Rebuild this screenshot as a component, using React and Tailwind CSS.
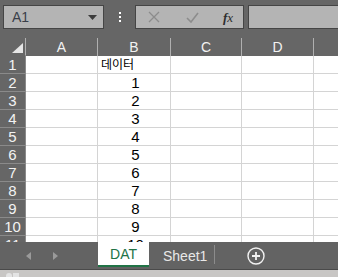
import React from "react";

const cols = [
  { name: "A", w: "w-[72px]" },
  { name: "B", w: "w-[73px]" },
  { name: "C", w: "w-[71px]" },
  { name: "D", w: "w-[72px]" },
];

const rows = [
  { n: 1, b: "데이터" },
  { n: 2, b: "1" },
  { n: 3, b: "2" },
  { n: 4, b: "3" },
  { n: 5, b: "4" },
  { n: 6, b: "5" },
  { n: 7, b: "6" },
  { n: 8, b: "7" },
  { n: 9, b: "8" },
  { n: 10, b: "9" },
  { n: 11, b: "10" },
];

function Row({ r }) {
  return (
    <div className="flex h-[18px] shrink-0">
      <div className="w-[26px] shrink-0 bg-[#666666] border-r border-b border-[#8a8a8a] flex items-center justify-center text-[15px] text-[#f2f2f2] leading-none">
        {r.n}
      </div>
      {cols.map((c) => (
        <div
          key={c.name}
          className={`${c.w} shrink-0 bg-white border-r border-b border-[#d4d4d4] flex items-center text-[15px] leading-none text-black ${
            c.name === "B" && r.n === 1 ? "justify-start pl-[3px]" : "justify-center"
          }`}
        >
          {c.name === "B" ? (
            r.n === 1 ? (
              <span className="text-[12px]">{r.b}</span>
            ) : (
              <span className="pl-[3px]">{r.b}</span>
            )
          ) : null}
        </div>
      ))}
      <div className="flex-1 bg-white border-b border-[#d4d4d4]" />
    </div>
  );
}

export default function App() {
  return (
    <div
      className="w-[338px] h-[277px] overflow-hidden flex flex-col bg-[#666666]"
      style={{ fontFamily: '"Liberation Sans", "Noto Sans CJK KR", sans-serif' }}
    >
      {/* formula bar */}
      <div className="h-[38px] shrink-0 flex items-start pt-[5px]">
        <div className="ml-[3px] w-[101px] h-[24px] bg-[#b4b4b4] border border-[#454545] flex items-center justify-between pl-[8px] pr-[6px]">
          <span className="text-[14px] text-[#3a3f4a] leading-none">A1</span>
          <svg width="9" height="5" viewBox="0 0 9 5">
            <path d="M0 0h9L4.5 5z" fill="#3c3c3c" />
          </svg>
        </div>
        <div className="w-[31px] h-[24px] flex flex-col items-center justify-center gap-[2px]">
          <div className="w-[2px] h-[2px] bg-white" />
          <div className="w-[2px] h-[2px] bg-white" />
          <div className="w-[2px] h-[2px] bg-white" />
        </div>
        <div className="w-[109px] h-[24px] bg-[#b4b4b4] border border-[#454545] flex items-center">
          <svg className="ml-[12px]" width="12" height="12" viewBox="0 0 12 12">
            <path d="M1 1l10 10M11 1L1 11" stroke="#8c8c8c" strokeWidth="1.3" />
          </svg>
          <svg className="ml-[26px]" width="13" height="11" viewBox="0 0 13 11">
            <path d="M1 6l4 4 7-9" stroke="#8c8c8c" strokeWidth="1.6" fill="none" />
          </svg>
          <span
            className="ml-[24px] text-[13px] italic text-[#2d2d2d] leading-none"
            style={{ fontFamily: '"Liberation Serif", serif' }}
          >
            <b>f</b>x
          </span>
        </div>
        <div className="ml-[4px] flex-1 h-[24px] bg-[#b4b4b4] border border-[#454545] border-r-0" />
      </div>

      {/* grid */}
      <div className="h-[204px] shrink-0 overflow-hidden flex flex-col">
        <div className="flex h-[18px] shrink-0 bg-[#666666]">
          <div className="w-[26px] shrink-0 border-r border-[#b0b0b0] border-b border-b-[#666666] flex items-end justify-end pr-[2px] pb-[2px]">
            <svg width="11" height="10" viewBox="0 0 11 10">
              <path d="M11 0v10H0z" fill="#e6e6e6" />
            </svg>
          </div>
          {cols.map((c) => (
            <div
              key={c.name}
              className={`${c.w} shrink-0 border-r border-[#b0b0b0] flex items-center justify-center text-[14px] text-[#f2f2f2] leading-none`}
            >
              {c.name}
            </div>
          ))}
          <div className="flex-1" />
        </div>
        {rows.map((r) => (
          <Row key={r.n} r={r} />
        ))}
      </div>

      {/* sheet tabs */}
      <div className="h-[28px] shrink-0 bg-[#636363] flex items-start border-b border-[#4a4a4a]">
        <div className="w-[98px] h-full flex items-center">
          <svg className="ml-[26px]" width="5" height="8" viewBox="0 0 5 8">
            <path d="M5 0v8L0 4z" fill="#9a9a9a" />
          </svg>
          <svg className="ml-[22px]" width="5" height="8" viewBox="0 0 5 8">
            <path d="M0 0v8l5-4z" fill="#9a9a9a" />
          </svg>
        </div>
        <div className="w-[51px] h-[25px] bg-white border-b-2 border-[#217346] flex items-center justify-center text-[14px] text-[#217346] leading-none">
          DAT
        </div>
        <div className="w-[65px] h-full flex items-center pl-[14px] text-[14px] text-[#e8e8e8] leading-none">
          Sheet1
        </div>
        <div className="w-px h-[19px] mt-[3px] bg-[#8c8c8c]" />
        <div className="flex-1 h-full flex items-center pl-[32px]">
          <svg width="18" height="18" viewBox="0 0 18 18">
            <circle cx="9" cy="9" r="8" stroke="#f2f2f2" strokeWidth="1.4" fill="none" />
            <path d="M9 5v8M5 9h8" stroke="#f2f2f2" strokeWidth="1.8" />
          </svg>
        </div>
      </div>
      <div className="flex-1 bg-[#c8c6c4] flex items-start pl-[6px] pt-[3px] gap-[1px]">
        <div className="w-[6px] h-[4px] rounded-t-full bg-[#e4e4e4]" />
        <div className="w-[6px] h-[4px] bg-[#e4e4e4]" />
      </div>
    </div>
  );
}
